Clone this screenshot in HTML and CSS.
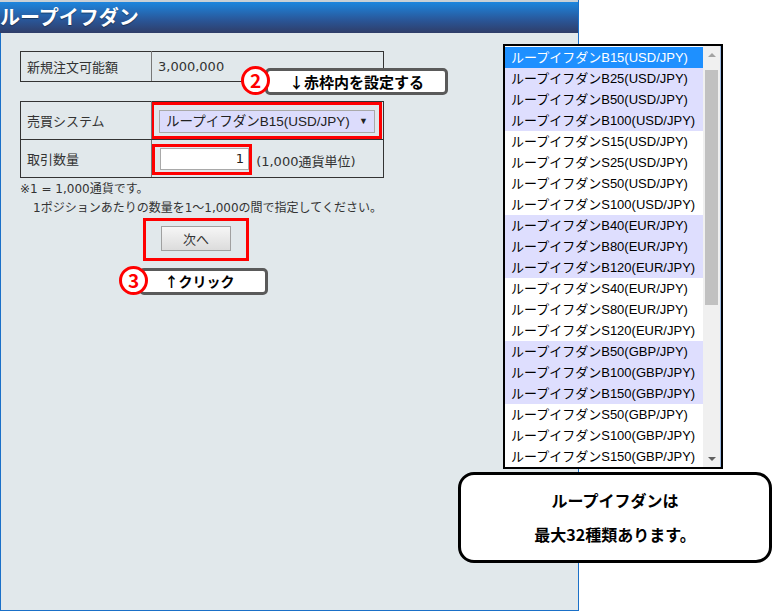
FILE: index.html
```html
<!DOCTYPE html>
<html lang="ja">
  <head>
    <meta charset="UTF-8" />
    <title>ループイフダン</title>
    <link rel="stylesheet" href="styles.css">
  </head>
  <body>
    <div class="panel">
      <div class="panel-head">ループイフダン</div>
      <div class="panel-body">
        <table class="info">
          <tr>
            <th>新規注文可能額</th>
            <td>3,000,000</td>
          </tr>
        </table>

        <table class="info order">
          <tr>
            <th>売買システム</th>
            <td>
              <div class="red-frame frame-select">
                <div class="select-box">ループイフダンB15(USD/JPY)<span class="caret">▼</span></div>
              </div>
            </td>
          </tr>
          <tr>
            <th>取引数量</th>
            <td>
              <span class="red-frame frame-qty"><span class="qty-input">1</span></span>
              <span class="unit">(1,000通貨単位)</span>
            </td>
          </tr>
        </table>

        <p class="note">※1 = 1,000通貨です。</p>
        <p class="note indent">1ポジションあたりの数量を1～1,000の間で指定してください。</p>

        <div class="next-row">
          <div class="red-frame frame-next">
            <button type="button" class="next-btn">次へ</button>
          </div>
        </div>
      </div>
    </div>

    <!-- annotations -->
    <div class="callout callout-2">
      <span class="num">2</span>
      <span class="callout-text">↓赤枠内を設定する</span>
    </div>
    <div class="callout callout-3">
      <span class="num">3</span>
      <span class="callout-text">↑クリック</span>
    </div>

    <div class="listbox">
      <ul class="options">
        <li class="buy selected">ループイフダンB15(USD/JPY)</li>
        <li class="buy">ループイフダンB25(USD/JPY)</li>
        <li class="buy">ループイフダンB50(USD/JPY)</li>
        <li class="buy">ループイフダンB100(USD/JPY)</li>
        <li>ループイフダンS15(USD/JPY)</li>
        <li>ループイフダンS25(USD/JPY)</li>
        <li>ループイフダンS50(USD/JPY)</li>
        <li>ループイフダンS100(USD/JPY)</li>
        <li class="buy">ループイフダンB40(EUR/JPY)</li>
        <li class="buy">ループイフダンB80(EUR/JPY)</li>
        <li class="buy">ループイフダンB120(EUR/JPY)</li>
        <li>ループイフダンS40(EUR/JPY)</li>
        <li>ループイフダンS80(EUR/JPY)</li>
        <li>ループイフダンS120(EUR/JPY)</li>
        <li class="buy">ループイフダンB50(GBP/JPY)</li>
        <li class="buy">ループイフダンB100(GBP/JPY)</li>
        <li class="buy">ループイフダンB150(GBP/JPY)</li>
        <li>ループイフダンS50(GBP/JPY)</li>
        <li>ループイフダンS100(GBP/JPY)</li>
        <li>ループイフダンS150(GBP/JPY)</li>
      </ul>
      <div class="scrollbar">
        <span class="arrow up"></span>
        <div class="track"><div class="thumb"></div></div>
        <span class="arrow down"></span>
      </div>
    </div>

    <div class="callout-box">
      <p>ループイフダンは</p>
      <p>最大32種類あります。</p>
    </div>
  </body>
</html>
```

FILE: styles.css
```css
body {
  margin: 0;
  background-color: #fff;
  font-family: "DejaVu Sans", "Noto Sans CJK JP", sans-serif;
  position: relative;
  width: 772px;
  height: 611px;
  overflow: hidden;
}
.panel {
  width: 579px;
  height: 611px;
  box-sizing: border-box;
  border-left: 1px solid #1a70c8;
  border-right: 1px solid #1a70c8;
  border-bottom: 1px solid #1a70c8;
  background-color: #e1e8eb;
  display: flex;
  flex-direction: column;
}
.panel-head {
  height: 31px;
  border-top: 2px solid #c9d0d6;
  background: linear-gradient(#1d86de, #2a5596 60%, #2f3d68);
  color: #fff;
  font-family: "Noto Sans CJK JP", sans-serif;
  font-weight: bold;
  font-size: 20px;
  line-height: 30px;
  margin-left: -1px;
  text-shadow: 0 1px 1px rgba(0, 0, 0, 0.4);
}
.panel-body {
  padding: 18px 0 0 19px;
}
.info {
  border-collapse: collapse;
  width: 364px;
  font-size: 13px;
  color: #333;
}
.info th,
.info td {
  border: 1px solid #333;
  text-align: left;
  font-weight: normal;
  padding: 0 0 0 6px;
  height: 29px;
}
.info th {
  width: 124px;
  border-right-color: #777;
}
.order {
  margin-top: 19px;
}
.order th,
.order td {
  height: 37px;
}
.order td {
  padding: 0;
  vertical-align: top;
}
.red-frame {
  border: 3px solid #f00;
  box-sizing: border-box;
}
.frame-select {
  height: 37px;
  margin-left: -1px;
  margin-right: 1px;
  padding: 5px 0 0 5px;
}
.select-box {
  position: relative;
  width: 216px;
  height: 23px;
  box-sizing: border-box;
  border: 1px solid #a9a9a9;
  background-color: #dcdcfc;
  font-family: "Liberation Sans", "Noto Sans CJK JP", sans-serif;
  font-size: 13.5px;
  line-height: 21px;
  padding-left: 6px;
  color: #222;
}
.caret {
  position: absolute;
  right: 6px;
  top: 0;
  font-size: 9px;
}
.frame-qty {
  display: inline-block;
  width: 100px;
  height: 31px;
  margin-top: 4px;
  padding: 1px 0 0 5px;
  vertical-align: top;
}
.qty-input {
  display: block;
  width: 89px;
  height: 22px;
  box-sizing: border-box;
  border: 1px solid #a9a9a9;
  background-color: #fff;
  text-align: right;
  padding-right: 4px;
  font-size: 13px;
  line-height: 20px;
  color: #222;
}
.unit {
  display: inline-block;
  margin-top: 11px;
  font-size: 13px;
  color: #333;
}
.note {
  margin: 3px 0 0 0;
  font-size: 12px;
  line-height: 16px;
  color: #333;
}
.indent {
  padding-left: 13px;
}
.next-row {
  margin-top: 2px;
  padding-left: 123px;
}
.frame-next {
  width: 106px;
  height: 43px;
  padding: 5px 0 0 15px;
}
.next-btn {
  width: 70px;
  height: 25px;
  border: 1px solid #a0a0a0;
  background: linear-gradient(#f6f6f6, #dcdcdc);
  font-family: "Noto Sans CJK JP", sans-serif;
  font-size: 13px;
  color: #333;
  padding: 0;
}

/* callouts */
.callout {
  position: absolute;
  display: flex;
  align-items: center;
}
.callout .num {
  width: 23px;
  height: 23px;
  border: 3px solid #f00;
  border-radius: 50%;
  background-color: #fff;
  color: #f00;
  font-family: "Noto Sans CJK JP", sans-serif;
  font-weight: bold;
  font-size: 19px;
  line-height: 22px;
  text-align: center;
  position: relative;
  z-index: 1;
}
.callout-text {
  background-color: #fff;
  border: 3px solid #5a5a5a;
  border-radius: 5px;
  font-family: "Noto Sans CJK JP", sans-serif;
  font-weight: bold;
  font-size: 14px;
  color: #000;
  text-align: center;
  box-sizing: border-box;
  height: 27px;
  line-height: 21px;
}
.callout-2 {
  left: 241px;
  top: 65px;
}
.callout-2 .callout-text {
  width: 183px;
  margin-left: -5px;
  font-size: 15px;
  margin-top: 3px;
}
.callout-3 {
  left: 119px;
  top: 266px;
}
.callout-3 .callout-text {
  width: 129px;
  margin-left: -9px;
  padding-right: 8px;
  margin-top: 2px;
}

/* listbox */
.listbox {
  position: absolute;
  left: 503px;
  top: 44px;
  width: 220px;
  height: 425px;
  box-sizing: border-box;
  border: 2px solid #000;
  background-color: #fff;
  display: flex;
}
.options {
  list-style: none;
  margin: 0;
  padding: 1px 0 0;
  flex: 1;
  overflow: hidden;
  font-family: "Liberation Sans", "Noto Sans CJK JP", sans-serif;
  font-size: 13px;
  color: #000;
}
.options li {
  height: 21px;
  line-height: 21px;
  padding-left: 6px;
  white-space: nowrap;
}
.options .buy {
  background-color: #dedefe;
}
.options .selected {
  background-color: #1e90ff;
  color: #fff;
}
.scrollbar {
  width: 17px;
  background-color: #f0f0f0;
  border-right: 1px solid #9ab8e0;
  display: flex;
  flex-direction: column;
}
.arrow {
  height: 17px;
  display: flex;
  align-items: center;
  justify-content: center;
}
.arrow.up::before {
  content: "";
  border-left: 4px solid transparent;
  border-right: 4px solid transparent;
  border-bottom: 4px solid #a3a3a3;
}
.arrow.down::before {
  content: "";
  border-left: 4px solid transparent;
  border-right: 4px solid transparent;
  border-top: 4px solid #606060;
}
.track {
  flex: 1;
  padding: 7px 2px 0;
}
.thumb {
  height: 235px;
  background-color: #c1c1c1;
}

.callout-box {
  position: absolute;
  left: 458px;
  top: 472px;
  width: 314px;
  height: 91px;
  box-sizing: border-box;
  border: 3px solid #000;
  border-radius: 16px;
  background-color: #fff;
  text-align: center;
  font-family: "Noto Sans CJK JP", sans-serif;
  font-weight: bold;
  font-size: 16px;
  color: #000;
  padding-top: 8px;
}
.callout-box p {
  margin: 0;
  line-height: 34px;
}
```
